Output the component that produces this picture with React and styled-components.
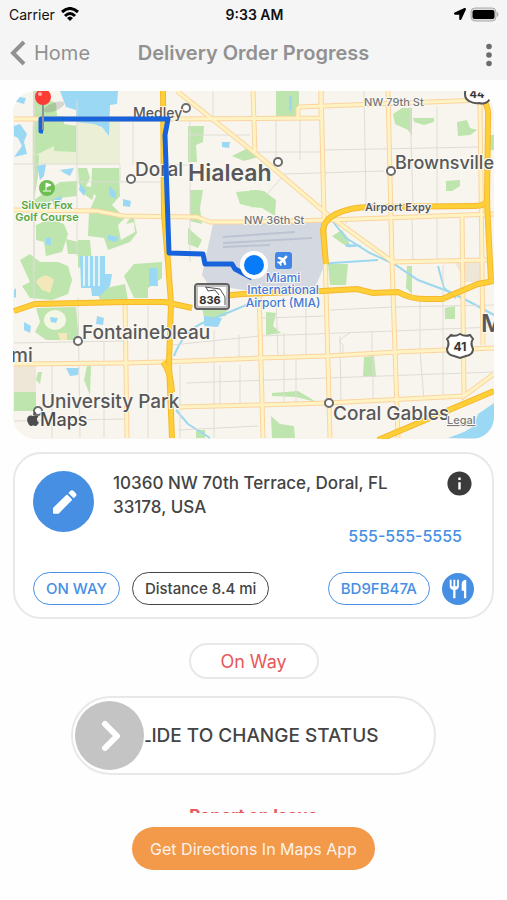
import React, { useState } from 'react';
import styled, { createGlobalStyle } from 'styled-components';
import { FaApple, FaLocationArrow, FaPlane } from 'react-icons/fa';
import { MdInfo, MdRestaurant } from 'react-icons/md';

const COLORS = {
  blue: '#478fe3',
  red: '#e9575a',
  orange: '#f3994a',
  textDark: '#444444',
  textMuted: '#919191',
  border: '#e8e8e8',
  bar: '#f5f5f5',
};

const GlobalStyle = createGlobalStyle`
  * {
    box-sizing: border-box;
  }
  body {
    margin: 0;
    background: #fefefe;
    color: ${COLORS.textDark};
    font-family: Inter, 'Liberation Sans', sans-serif;
  }
  button, input {
    font-family: inherit;
  }
`;

// --- 1. Layout ---

const Page = styled.div`
  display: flex;
  flex-direction: column;
  height: 100vh;
`;

const Content = styled.main`
  flex: 1;
  min-height: 0;
  display: flex;
  flex-direction: column;
  align-items: center;
  padding: 11px 13px 0;
  overflow-y: auto;
  scrollbar-width: none;

  & > * {
    flex-shrink: 0;
  }
`;

const Footer = styled.footer`
  display: flex;
  justify-content: center;
  padding: 14px 14px 30px;
`;

// --- 2. Status bar and header ---

const TopBar = styled.header`
  background-color: ${COLORS.bar};
`;

const StatusBar = styled.div`
  display: grid;
  grid-template-columns: 1fr auto 1fr;
  align-items: center;
  height: 28px;
  padding: 0 7px 0 9px;
  color: #111;
  font-size: 14px;
`;

const StatusGroup = styled.div`
  display: flex;
  align-items: center;
  justify-content: ${({ $end }) => ($end ? 'flex-end' : 'flex-start')};
  gap: ${({ $end }) => ($end ? '4px' : '6px')};
`;

const Clock = styled.time`
  font-weight: 600;
`;

const NavBar = styled.nav`
  display: grid;
  grid-template-columns: 1fr auto 1fr;
  align-items: center;
  height: 52px;
  padding: 0 10px 2px;
  color: ${COLORS.textMuted};
`;

const BackLink = styled.a`
  display: flex;
  align-items: center;
  gap: 8px;
  color: inherit;
  font-size: 20px;
  text-decoration: none;
`;

const Title = styled.h1`
  margin: 0;
  font-size: 20px;
  font-weight: 600;
`;

const MenuButton = styled.button`
  justify-self: end;
  display: flex;
  padding: 4px 4px 0;
  border: none;
  background: none;
  color: #6c6c6c;
  cursor: pointer;
`;

// --- 3. Map ---

const MapFrame = styled.section`
  width: 100%;
  border-radius: 22px;
  overflow: hidden;
`;

const MapSvg = styled.svg`
  display: block;
  width: 100%;
  height: auto;
  font-family: Inter, 'Liberation Sans', sans-serif;
`;

const PlaceLabel = styled.text`
  font-size: ${({ $size }) => $size || 17}px;
  font-weight: ${({ $weight }) => $weight || 500};
  fill: ${({ $color }) => $color || '#58585a'};
  text-anchor: ${({ $middle }) => ($middle ? 'middle' : 'start')};
  stroke: #fbf9f4;
  stroke-width: 2px;
  stroke-linejoin: round;
  paint-order: stroke;
`;

// --- 4. Order card ---

const Card = styled.section`
  width: 100%;
  margin-top: 13px;
  padding: 15px 18px 12px;
  border: 2px solid ${COLORS.border};
  border-radius: 28px;
  background-color: #fff;
`;

const CardTop = styled.div`
  display: flex;
  align-items: flex-start;
`;

const EditButton = styled.button`
  display: flex;
  align-items: center;
  justify-content: center;
  width: 61px;
  height: 61px;
  margin: 2px 19px 0 0;
  border: none;
  border-radius: 50%;
  background-color: ${COLORS.blue};
  color: #fff;
  cursor: pointer;
`;

const Details = styled.div`
  flex: 1;
  display: flex;
  flex-direction: column;
  gap: 5px;
`;

const AddressRow = styled.div`
  display: flex;
  align-items: flex-start;
  justify-content: space-between;
`;

const Address = styled.address`
  max-width: 290px;
  padding-top: 2px;
  font-size: 17px;
  font-style: normal;
  font-weight: 500;
  line-height: 24px;
`;

const InfoButton = styled.button`
  display: flex;
  padding: 0;
  border: none;
  background: none;
  color: #3b3b3b;
  cursor: pointer;
`;

const Phone = styled.a`
  align-self: flex-end;
  margin-right: 12px;
  color: ${COLORS.blue};
  font-size: 16px;
  font-weight: 500;
  line-height: 24px;
  text-decoration: none;
`;

const TagRow = styled.div`
  display: flex;
  align-items: center;
  gap: 12px;
  margin-top: 24px;
`;

const Tag = styled.span`
  display: flex;
  align-items: center;
  height: 33px;
  padding: 0 12px;
  border: 1px solid currentColor;
  border-radius: 17px;
  color: ${({ $dark }) => ($dark ? COLORS.textDark : COLORS.blue)};
  font-size: 15px;
  font-weight: 500;
  white-space: nowrap;
  margin-left: ${({ $push }) => ($push ? 'auto' : '0')};
`;

const FoodBadge = styled.span`
  display: flex;
  align-items: center;
  justify-content: center;
  width: 32px;
  height: 32px;
  border-radius: 50%;
  background-color: ${COLORS.blue};
  color: #fff;
`;

// --- 5. Status controls ---

const StatusPill = styled.div`
  display: flex;
  align-items: center;
  justify-content: center;
  width: 130px;
  height: 36px;
  margin-top: 24px;
  border: 2px solid ${COLORS.border};
  border-radius: 18px;
  background-color: #fff;
  color: ${COLORS.red};
  font-size: 18px;
`;

const SlideTrack = styled.label`
  display: grid;
  align-items: center;
  width: 76%;
  height: 79px;
  margin-top: 17px;
  padding: 0 2px;
  border: 2px solid ${COLORS.border};
  border-radius: 40px;
  background-color: #fff;

  & > * {
    grid-area: 1 / 1;
  }
`;

const SlideText = styled.span`
  text-align: center;
  font-size: 19px;
  font-weight: 500;
`;

const SlideInput = styled.input`
  appearance: none;
  width: 100%;
  height: 70px;
  margin: 0;
  background: transparent;
  cursor: pointer;

  &::-webkit-slider-thumb {
    appearance: none;
    width: 69px;
    height: 69px;
    border-radius: 50%;
    background: #c4c4c4 url("data:image/svg+xml,%3Csvg xmlns='http://www.w3.org/2000/svg' viewBox='0 0 69 69'%3E%3Cpath d='M30 23l12 12-12 12' fill='none' stroke='white' stroke-width='6' stroke-linecap='round' stroke-linejoin='round'/%3E%3C/svg%3E") center / 100% no-repeat;
    box-shadow: 0 0 0 2px #fff;
  }
`;

const ReportLink = styled.a`
  margin-top: 29px;
  color: ${COLORS.red};
  font-size: 17px;
  font-weight: 700;
  line-height: 24px;
  text-decoration: none;
`;

const DirectionsButton = styled.button`
  height: 43px;
  padding: 0 18px;
  border: none;
  border-radius: 22px;
  background-color: ${COLORS.orange};
  color: #fdf3e8;
  font-size: 16px;
  cursor: pointer;
`;

// --- 6. Map data ---

const GREENS = [
  '33,91 49,91 49,100 56,103 57,116 63,116 64,124 76,126 76,152 54,151 54,146 36,155 33,150',
  '33,155 39,155 38,176 34,200 60,182 77,181 77,196 60,198 42,204 34,204',
  '92,168 119,168 120,196 112,205 125,218 118,225 121,240 135,232 134,222 126,224 133,214 137,233 130,242 108,250 104,238 88,236 89,212 96,196 91,190',
  '78,168 87,168 90,178 86,186 96,188 92,200 84,194 79,184',
  '36,225 50,219 64,224 68,234 62,252 46,256 44,242 36,240',
  '66,239 78,242 78,254 68,254',
  '20,260 30,254 40,262 58,262 68,266 72,280 68,294 52,300 30,298 22,286 30,282',
  '78,240 90,240 92,262 78,268',
  '96,290 125,284 128,300 100,300',
  '134,264 162,262 162,278 148,288 148,298 134,298 124,276',
  '36,308 76,307 79,340 46,340 35,332 40,322',
  '14,392 36,392 36,411 14,411',
  '188,126 204,126 203,142 196,145 197,162 188,162',
  '190,190 203,190 200,208 202,224 190,221',
  '188,228 202,240 198,248 188,244',
  '236,192 260,190 260,205 248,206 240,204',
  '232,156 248,148 258,157 244,161',
  '276,91 299,91 299,117 276,117',
  '250,190 264,191 276,200 275,216 262,208 250,207',
  '393,114 402,108 412,108 412,136 408,130 395,124',
  '413,118 434,118 434,122 424,125 414,122',
  '457,122 467,120 470,128 477,130 470,135 458,136',
  '446,181 460,180 460,186 452,191 446,191',
  '490,135 494,135 494,150 490,150',
  '332,236 342,230 348,238 350,248 340,242',
  '328,264 348,264 346,285 330,285',
  '266,312 276,313 273,326 281,333 266,335',
  '445,308 455,306 455,319 445,319',
  '364,357 374,356 376,377 363,377',
  '272,393 298,391 310,398 316,402 296,397 272,396',
  '271,416 280,424 294,426 295,438 272,438',
  '87,366 91,366 90,395 84,380',
  '38,372 42,372 40,384 36,380',
  '196,430 205,430 205,438 196,438',
  '407,266 412,266 412,294 406,288',
  '202,308 228,300 226,316 204,318',
];

const WATERS = [
  '60,91 118,91 117,104 110,105 109,136 102,127 94,124 76,122 76,110 66,107',
  '14,96 26,98 24,104 14,101',
  '14,126 20,124 27,134 24,142 27,154 14,157 22,146 18,138 14,136',
  '37,166 46,164 44,176 40,180',
  '60,170 74,168 70,176 64,173',
  '80,184 86,190 84,196 79,190',
  '109,186 116,192 116,199 110,196',
  '123,199 131,201 130,207 123,206',
  '108,235 119,237 116,242 108,240',
  '46,238 51,238 51,245 46,245',
  '80,256 105,256 105,274 112,274 110,286 100,296 92,296 91,288 81,288',
  '149,268 157,268 158,286 149,286',
  '97,316 104,318 103,325 96,324',
  '24,322 31,326 30,333 24,330',
  '14,290 16,288 16,297 14,298',
  '66,368 79,368 78,375 70,376',
  '204,316 222,318 218,327 204,326',
  '289,96 292,96 292,112 289,110',
  '222,142 230,142 229,148 222,147',
  '345,244 362,245 355,247 346,247',
  '448,438 464,432 474,426 478,414 494,403 494,439',
  '52,200 62,196 61,208 54,206',
  '50,317 58,318 56,323 51,322',
];

const STREETS = [
  'M34 91V270M77 100V256M120 165V182M14 164H120M77 182H163M133 119V165M163 165H190M190 119V262',
  'M213 91V119M188 135H250M276 119V160M300 119V160M254 152H324M324 150L480 147M284 174L384 171',
  'M364 91L366 205M410 107L413 205M437 107V205M481 150V202M266 195L284 175M346 218V224',
  'M14 343L125 341M34 91V300M78 298L80 438M52 364V438M104 341V438M148 306V438M180 365V438M214 330V438M239 335V358',
  'M172 345L260 336L393 331L494 327M186 383L327 378L494 372M276 300L278 356M284 333V405M306 308V356',
  'M340 336L341 405M350 333Q334 341 343 345V358M372 331V358M373 358V402M420 300V350M443 265V400M420 352L424 400',
  'M330 310L394 307L494 305M262 318L326 316M412 216L413 262M437 216V262M14 421L125 419M178 430L258 426M296 358V402M220 365V405M240 365V405',
];

const ROADS = [
  'M14 119H168L321 118V91',
  'M298 107V118M298 107L482 100',
  'M253 91L255 152',
  'M321 91L324 215L330 438',
  'M388 91L392 262L398 438',
  'M480 103L483 345',
  'M462 215L464 396L494 374',
  'M259 290L263 438',
  'M125 300L127 438',
  'M14 210L97 211L123 216L197 217L210 222H243L330 220L494 214',
  'M393 262L490 260',
  'M14 364L125 363L163 362L260 358L327 356L397 352L494 348',
  'M177 407L260 405L327 403L464 396',
  'M177 91L260 157L328 215L393 262',
];

const HIGHWAYS = [
  'M163 91L164 215L168 262L171 303L169 363L172 438',
  'M163 362Q171 372 172 392',
  'M14 311L35 304L125 302L165 302L192 308M210 297L243 294L322 291L357 289L373 293L398 292Q412 300 430 299L442 299L478 284L494 281',
  'M326 264L323 230Q324 220 336 214Q352 206 375 207L474 206Q486 206 488 200',
  'M484 101Q489 108 488 118L487 202L491 282',
  'M378 440L494 391',
];

const TOWNS = [
  [186, 108], [131, 179], [278, 162], [391, 171], [78, 341], [38, 411], [329, 403],
];

// --- 7. Components ---

const DeliveryMap = () => (
  <MapFrame aria-label="Route map">
    <MapSvg viewBox="13 91 481 348">
      <rect x="13" y="91" width="482" height="348" fill="#f8f5ee" />
      <path d="M76 118H120V164H76ZM32 125H77V164H32Z" fill="#e6edcb" opacity="0.7" />
      <path d="M14 364H36V392H14ZM455 263H484V282H465Z" fill="#eee6d6" />
      {GREENS.map((points) => <polygon key={points} points={points} fill="#bde5ad" />)}
      <path d="M36 282Q44 270 54 280L50 293L42 290ZM58 333H67V340H60Z" fill="#f3e8ba" />
      <ellipse cx="55" cy="320" rx="11" ry="10" fill="#f5f7e5" />
      {WATERS.map((points) => <polygon key={points} points={points} fill="#9bd8f3" />)}
      <path d="M84 256V286M89 256V286M94 256V286M99 256V286" stroke="#e2f4fb" strokeWidth="2" />
      <g fill="none" stroke="#9bd8ef" strokeWidth="2">
        <path d="M174 356Q184 330 205 322Q230 312 258 300" />
        <path d="M330 218L346 238L370 253L394 264L418 280L450 292L470 302L494 315" />
        <path d="M320 265L332 263L378 260" />
        <path d="M176 410L188 424L210 438M438 266L444 288L456 298" />
      </g>
      <path d="M213 224L322 222L325 264L314 290L243 290L208 284L202 275Z" fill="#d4d8e1" />
      <path d="M223 237L295 232M223 243L312 238M223 247L270 245" stroke="#bcc4d2" strokeWidth="2" />
      <g fill="none">
        {STREETS.map((d) => <path key={d} d={d} stroke="#dfdcd6" strokeWidth="1" />)}
        {ROADS.map((d) => <path key={d} d={d} stroke="#fad4a0" strokeWidth="5" />)}
        {ROADS.map((d) => <path key={d} d={d} stroke="#fff3c4" strokeWidth="3" />)}
        {HIGHWAYS.map((d) => <path key={d} d={d} stroke="#f5b82e" strokeWidth="6" />)}
        {HIGHWAYS.map((d) => <path key={d} d={d} stroke="#ffcf38" strokeWidth="4" />)}
      </g>

      {TOWNS.map(([x, y]) => (
        <circle key={`${x}-${y}`} cx={x} cy={y} r="4" fill="#fff" stroke="#6b6b6b" strokeWidth="2" />
      ))}
      <PlaceLabel x="133" y="118" $size={14}>Medley</PlaceLabel>
      <PlaceLabel x="135" y="176" $size={19}>Doral</PlaceLabel>

      {/* destination pin and the driven route */}
      <ellipse cx="54" cy="107" rx="11" ry="4" fill="#555" opacity="0.2" transform="rotate(-22 54 107)" />
      <path
        d="M43 131H41V119H168L165 135L169 253L203 254L205 264H232L235 269L252 278"
        fill="none"
        stroke="#1763dc"
        strokeWidth="5"
        strokeLinejoin="round"
      />
      <path d="M43 103V130" stroke="#8d969f" strokeWidth="2" />
      <circle cx="43" cy="97" r="8" fill="#fb3b34" />
      <circle cx="40" cy="94" r="2" fill="#ffb0aa" />

      <PlaceLabel x="188" y="181" $size={23} $weight={600}>Hialeah</PlaceLabel>
      <PlaceLabel x="395" y="169" $size={18}>Brownsville</PlaceLabel>
      <PlaceLabel x="82" y="339" $size={19}>Fontainebleau</PlaceLabel>
      <PlaceLabel x="41" y="408" $size={19}>University Park</PlaceLabel>
      <PlaceLabel x="333" y="420" $size={19}>Coral Gables</PlaceLabel>
      <PlaceLabel x="11" y="362" $size={19}>mi</PlaceLabel>
      <PlaceLabel x="481" y="332" $size={24} $weight={600}>M</PlaceLabel>
      <PlaceLabel x="364" y="106" $size={11} $color="#77777a">NW 79th St</PlaceLabel>
      <PlaceLabel x="244" y="224" $size={11} $color="#77777a">NW 36th St</PlaceLabel>
      <PlaceLabel x="365" y="211" $size={11} $weight={600}>Airport Expy</PlaceLabel>
      <PlaceLabel $size={11} $weight={600} $color="#58a845" $middle>
        <tspan x="47" y="209">Silver Fox</tspan>
        <tspan x="47" y="221">Golf Course</tspan>
      </PlaceLabel>
      <PlaceLabel $size={12} $weight={500} $color="#437bd8" $middle>
        <tspan x="283" y="282">Miami</tspan>
        <tspan x="283" y="294">International</tspan>
        <tspan x="283" y="307">Airport (MIA)</tspan>
      </PlaceLabel>

      <circle cx="47" cy="188" r="8" fill="#6fbe52" />
      <path d="M46 190V183L51 185L46 187M43 191H51" fill="#fff" stroke="#fff" strokeWidth="1" />
      <rect x="275" y="252" width="17" height="17" rx="3" fill="#3f86e8" />
      <g transform="rotate(-45 283 260)">
        <FaPlane x="277" y="254" size={12} color="#fff" />
      </g>

      {/* road shields */}
      <rect x="195" y="284" width="34" height="25" rx="3" fill="#fff" stroke="#626262" strokeWidth="2" />
      <path d="M205 287L220 289L225 297V305M206 287L208 291L215 290L219 295" fill="none" stroke="#555" strokeWidth="1" />
      <rect x="197" y="286" width="30" height="21" rx="1" fill="none" stroke="#888" strokeWidth="1" />
      <PlaceLabel x="210" y="304" $size={11} $weight={700} $color="#333" $middle>836</PlaceLabel>
      <path
        d="M451 335Q455 337 460 334Q465 337 470 335L473 339Q470 343 473 349Q473 355 466 356L460 358L454 356Q447 355 447 349Q450 343 447 339Z"
        fill="#fff"
        stroke="#555"
        strokeWidth="2"
      />
      <PlaceLabel x="460" y="351" $size={12} $weight={700} $color="#333" $middle>41</PlaceLabel>
      <path d="M466 88Q463 98 469 101Q474 104 479 103Q486 105 490 99V88Z" fill="#fff" stroke="#555" strokeWidth="2" />
      <PlaceLabel x="477" y="98" $size={11} $weight={700} $color="#333" $middle>44</PlaceLabel>

      <circle cx="254" cy="265" r="14" fill="#fff" />
      <circle cx="254" cy="265" r="10" fill="#087bf8" />

      <FaApple x="25" y="411" size={16} color="#4d4d4d" />
      <PlaceLabel x="40" y="426" $size={18} $color="#4d4d4d">Maps</PlaceLabel>
      <a href="#legal">
        <PlaceLabel x="447" y="424" $size={11} $color="#7a7d80" textDecoration="underline">Legal</PlaceLabel>
      </a>
    </MapSvg>
  </MapFrame>
);

const WifiIcon = () => (
  <svg width="18" height="14" viewBox="0 0 18 14" fill="none" stroke="#000" strokeWidth="3">
    <path d="M1 5Q9 -2 17 5M4 9Q9 4 14 9" />
    <path d="M9 14L6 11Q9 8 12 11Z" fill="#000" stroke="none" />
  </svg>
);

const BatteryIcon = () => (
  <svg width="30" height="15" viewBox="0 0 30 15">
    <rect x="1" y="1" width="25" height="13" rx="4" fill="#ddd" stroke="#aaa" strokeWidth="1" />
    <rect x="2.5" y="3" width="22" height="9" rx="2" fill="#000" />
    <path d="M27 5Q30 7 27 10Z" fill="#aaa" />
  </svg>
);

const PencilIcon = () => (
  <svg width="26" height="26" viewBox="0 0 78 78" fill="currentColor" stroke="currentColor" strokeWidth="4" strokeLinejoin="round">
    <path d="M8 72V58L48 19L61 32L22 72Z" />
    <path d="M55 12L60 7Q63 4 66 7L73 14Q76 17 73 20L68 25Z" />
  </svg>
);

const App = () => {
  const [slide, setSlide] = useState(0);

  return (
    <Page>
      <GlobalStyle />
      <TopBar>
        <StatusBar>
          <StatusGroup>
            <span>Carrier</span>
            <WifiIcon />
          </StatusGroup>
          <Clock>9:33 AM</Clock>
          <StatusGroup $end>
            <FaLocationArrow size={12} color="#000" />
            <BatteryIcon />
          </StatusGroup>
        </StatusBar>
        <NavBar>
          <BackLink href="#home">
            <svg width="16" height="26" viewBox="0 0 16 26" fill="none" stroke="currentColor" strokeWidth="4">
              <path d="M14 2L3 13L14 24" />
            </svg>
            Home
          </BackLink>
          <Title>Delivery Order Progress</Title>
          <MenuButton aria-label="More options">
            <svg width="8" height="24" viewBox="0 0 8 24" fill="currentColor">
              <circle cx="4" cy="3.5" r="2.8" />
              <circle cx="4" cy="12" r="2.8" />
              <circle cx="4" cy="20.5" r="2.8" />
            </svg>
          </MenuButton>
        </NavBar>
      </TopBar>

      <Content>
        <DeliveryMap />

        <Card>
          <CardTop>
            <EditButton aria-label="Edit order">
              <PencilIcon />
            </EditButton>
            <Details>
              <AddressRow>
                <Address>10360 NW 70th Terrace, Doral, FL 33178, USA</Address>
                <InfoButton aria-label="Order info">
                  <MdInfo size={29} />
                </InfoButton>
              </AddressRow>
              <Phone href="tel:555-555-5555">555-555-5555</Phone>
            </Details>
          </CardTop>
          <TagRow>
            <Tag>ON WAY</Tag>
            <Tag $dark>Distance 8.4 mi</Tag>
            <Tag $push>BD9FB47A</Tag>
            <FoodBadge>
              <MdRestaurant size={22} />
            </FoodBadge>
          </TagRow>
        </Card>

        <StatusPill>On Way</StatusPill>

        <SlideTrack>
          <SlideText>SLIDE TO CHANGE STATUS</SlideText>
          <SlideInput
            type="range"
            min="0"
            max="100"
            value={slide}
            onChange={(e) => setSlide(Number(e.target.value))}
          />
        </SlideTrack>

        <ReportLink href="#report">Report an Issue</ReportLink>
      </Content>

      <Footer>
        <DirectionsButton>Get Directions In Maps App</DirectionsButton>
      </Footer>
    </Page>
  );
};

export default App;
